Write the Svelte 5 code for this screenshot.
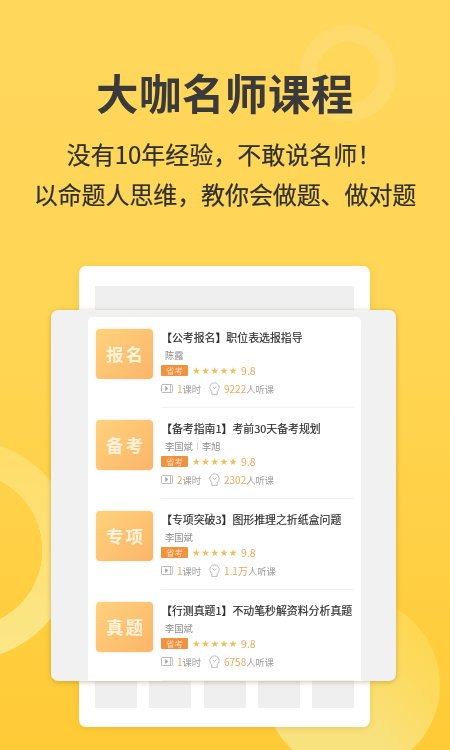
<script lang="ts">
  // Promo screen: headline over a stacked pair of cards with a course list.
  const courses = [
    { thumb: '报名', title: '【公考报名】职位表选报指导', teachers: ['陈露'], lessons: 1, listeners: '9222' },
    { thumb: '备考', title: '【备考指南1】考前30天备考规划', teachers: ['李国斌', '李旭'], lessons: 2, listeners: '2302' },
    { thumb: '专项', title: '【专项突破3】图形推理之折纸盒问题', teachers: ['李国斌'], lessons: 1, listeners: '1.1万' },
    { thumb: '真题', title: '【行测真题1】不动笔秒解资料分析真题', teachers: ['李国斌'], lessons: 1, listeners: '6758' },
  ];
</script>

<div class="page">
  <div class="deco ring-top"></div>
  <div class="deco ring-left"></div>
  <div class="deco disc-right"></div>

  <header class="head">
    <h1>大咖名师课程</h1>
    <p class="line-a">没有10年经验，不敢说名师！</p>
    <p class="line-b">以命题人思维，教你会做题、做对题</p>
  </header>

  <div class="stage">
    <div class="back">
      <div class="back-bar"></div>
      <div class="back-gap"></div>
      <div class="back-blocks">
        <span></span><span></span><span></span><span></span><span></span>
      </div>
    </div>

    <div class="front">
      <div class="list">
        {#each courses as c}
          <div class="row">
            <div class="thumb">{c.thumb}</div>
            <div class="info">
              <div class="title">{c.title}</div>
              <div class="teachers">
                {#each c.teachers as t, j}
                  {#if j > 0}<i class="sep"></i>{/if}<span>{t}</span>
                {/each}
              </div>
              <div class="rating">
                <span class="tag">省考</span>
                <span class="stars">★★★★★</span>
                <span class="score">9.8</span>
              </div>
              <div class="meta">
                <svg width="12" height="9" viewBox="0 0 12 9" fill="none" stroke="#aaa" stroke-width="0.8">
                  <rect x="0.5" y="0.5" width="11" height="8" rx="1" />
                  <path d="M4.5 2.6 L7 4.5 L4.5 6.4 Z" fill="#aaa" />
                  <path d="M9.5 0.5 V8.5" />
                </svg>
                <span class="lessons"><b>{c.lessons}</b>课时</span>
                <svg width="11" height="13" viewBox="0 0 11 13" fill="none" stroke="#aaa" stroke-width="0.8">
                  <path d="M2.8 9.4 A4.7 4.7 0 1 1 8.2 9.4 L8.2 12.4 H2.8 Z" />
                  <path d="M3.6 4.6 L5.5 6.4 L7.4 4.6" />
                </svg>
                <span class="count"><b>{c.listeners}</b>人听课</span>
              </div>
            </div>
          </div>
        {/each}
      </div>
    </div>
  </div>
</div>

<style>
  :global(body) {
    margin: 0;
  }
  .page {
    position: relative;
    width: 450px;
    height: 750px;
    overflow: hidden;
    background: linear-gradient(180deg, #ffd75b 0%, #ffd656 40%, #ffcb36 100%);
    font-family: "Noto Sans CJK SC", "Liberation Sans", sans-serif;
    color: #333;
  }
  .deco {
    position: absolute;
    border-radius: 50%;
    box-sizing: border-box;
  }
  .ring-top {
    left: 300px;
    top: 25px;
    width: 96px;
    height: 96px;
    border: 17px solid rgba(255, 255, 255, 0.12);
  }
  .ring-left {
    left: -145px;
    top: 440px;
    width: 220px;
    height: 220px;
    background: linear-gradient(180deg, rgba(255, 238, 150, 0.4), rgba(250, 235, 150, 0.85));
    -webkit-mask-image: radial-gradient(circle, transparent 77px, #000 77.5px);
    mask-image: radial-gradient(circle, transparent 77px, #000 77.5px);
  }
  .disc-right {
    left: 264px;
    top: 597px;
    width: 176px;
    height: 176px;
    background: linear-gradient(225deg, rgba(255, 225, 100, 0.5) 15%, #f8e27e 60%);
  }
  .head {
    position: relative;
    height: 266px;
    text-align: center;
  }
  h1 {
    margin: 0;
    padding-top: 64px;
    font-size: 42.5px;
    line-height: 56px;
    font-weight: 700;
    letter-spacing: 0.5px;
    color: #3a3a3a;
    filter: blur(0.3px);
  }
  .head p {
    margin: 0;
    color: #2f2f2f;
    font-size: 24px;
    white-space: nowrap;
    -webkit-text-stroke: 0.2px #2f2f2f;
    filter: blur(0.25px);
  }
  .line-a {
    padding-top: 14px;
    line-height: 40px;
    transform: translateX(-1px);
  }
  .line-b {
    line-height: 40px;
    letter-spacing: -0.1px;
  }
  .stage {
    position: relative;
    width: 291px;
    margin-left: 79px;
  }
  .back {
    display: flex;
    flex-direction: column;
    height: 461px;
    box-sizing: border-box;
    padding: 20px 16px 19px 16px;
    background: #fff;
    border-radius: 7px;
    box-shadow: 0 2px 6px rgba(170, 120, 20, 0.18);
  }
  .back-bar {
    height: 24px;
    background: #efefef;
  }
  .back-gap {
    flex: 1;
  }
  .back-blocks {
    display: flex;
    justify-content: space-between;
    height: 27px;
  }
  .back-blocks span {
    width: 42px;
    background: #efefef;
  }
  .front {
    position: absolute;
    left: -28px;
    top: 44px;
    width: 345px;
    height: 371px;
    box-sizing: border-box;
    padding: 7px 35px 0 37px;
    background: #f1f1f1;
    border-radius: 7px;
    box-shadow: 0 1px 5px rgba(110, 85, 20, 0.35);
  }
  .list {
    height: 364px;
    background: #fff;
    border-radius: 5px 5px 0 0;
    overflow: hidden;
    box-sizing: border-box;
    padding-left: 8px;
  }
  .row {
    display: flex;
    height: 91px;
  }
  .thumb {
    flex: none;
    width: 57px;
    height: 50px;
    margin-top: 12px;
    border-radius: 4px;
    background: linear-gradient(135deg, #ffd27c 0%, #fbb56a 100%);
    box-shadow: 0 0 3px rgba(250, 190, 110, 0.35);
    color: #fff3dc;
    font-size: 17.5px;
    font-weight: 700;
    letter-spacing: 2px;
    text-indent: 2px;
    text-align: center;
    line-height: 50px;
    filter: blur(0.4px);
  }
  .info {
    flex: 1;
    min-width: 0;
    margin-left: 8px;
    margin-right: 7px;
    padding-top: 12px;
    border-bottom: 1px solid #f2f2f2;
    box-sizing: border-box;
    filter: blur(0.3px);
  }
  .title {
    font-size: 10.9px;
    line-height: 16px;
    color: #2c2c2c;
    white-space: nowrap;
    -webkit-text-stroke: 0.15px #2c2c2c;
  }
  .teachers {
    display: flex;
    align-items: center;
    margin-top: 3px;
    margin-left: 4px;
    height: 14px;
    font-size: 9.3px;
    color: #8d8d8d;
  }
  .sep {
    width: 1px;
    height: 8px;
    margin: 0 4px;
    background: #d6d6d6;
  }
  .rating {
    display: flex;
    align-items: center;
    margin-top: 2px;
    height: 12px;
  }
  .tag {
    width: 27px;
    height: 11px;
    border-radius: 1px;
    background: #f09240;
    color: #ffdcbb;
    font-size: 8.5px;
    line-height: 11px;
    text-align: center;
  }
  .stars {
    margin-left: 4px;
    font-family: "DejaVu Sans", sans-serif;
    font-size: 9.5px;
    letter-spacing: 0.7px;
    color: #f4bd5a;
  }
  .score {
    margin-left: 3px;
    font-size: 10.5px;
    color: #e9a95e;
  }
  .meta {
    display: flex;
    align-items: center;
    margin-top: 5px;
    height: 14px;
    font-size: 9.3px;
    color: #9b9b9b;
  }
  .meta b {
    font-weight: 400;
    color: #e9a95e;
    font-size: 10px;
  }
  .lessons {
    margin-left: 4px;
    width: 32px;
  }
  .count {
    margin-left: 4px;
  }
</style>
